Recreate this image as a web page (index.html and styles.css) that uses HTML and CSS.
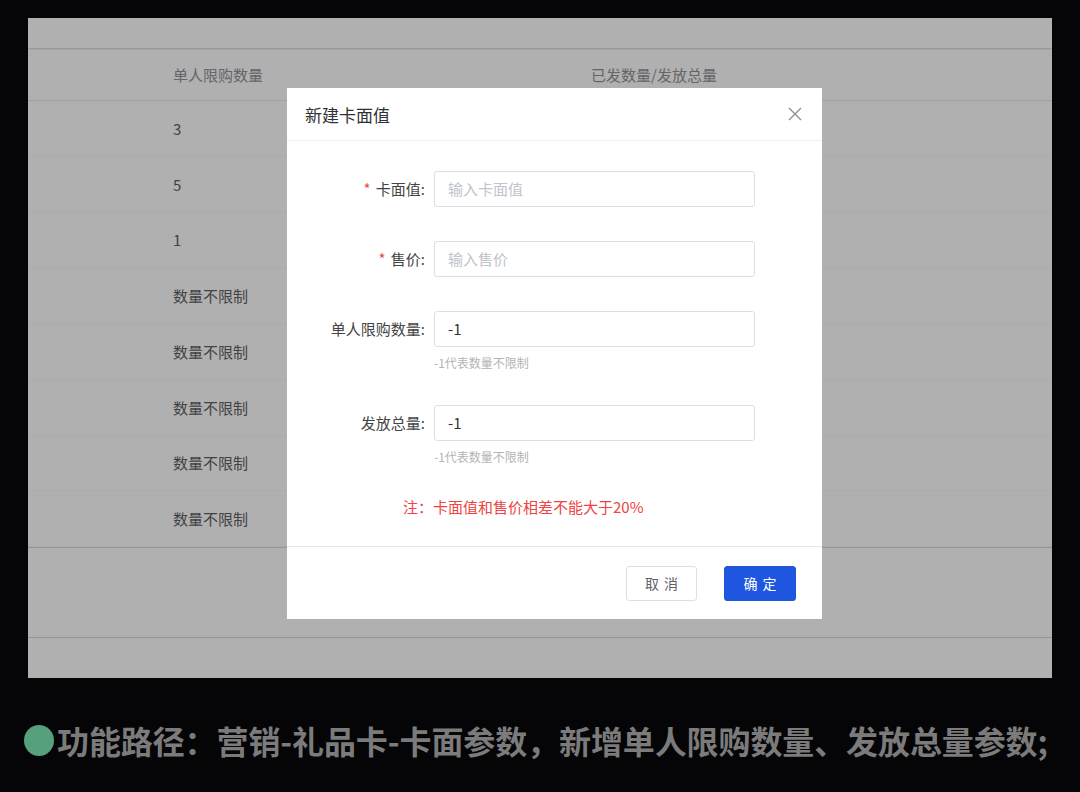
FILE: index.html
```html
<!DOCTYPE html>
<html lang="zh-CN">
<head>
    <meta charset="UTF-8">
    <title>新建卡面值</title>
    <link rel="stylesheet" href="styles.css">
</head>
<body>
    <div class="page">
        <div class="panel">
            <div class="top-band"></div>
            <div class="table">
                <div class="row head">
                    <div class="cell"></div>
                    <div class="cell">单人限购数量</div>
                    <div class="cell">已发数量/发放总量</div>
                </div>
                <div class="row"><div class="cell"></div><div class="cell">3</div><div class="cell"></div></div>
                <div class="row"><div class="cell"></div><div class="cell">5</div><div class="cell"></div></div>
                <div class="row"><div class="cell"></div><div class="cell">1</div><div class="cell"></div></div>
                <div class="row"><div class="cell"></div><div class="cell">数量不限制</div><div class="cell"></div></div>
                <div class="row"><div class="cell"></div><div class="cell">数量不限制</div><div class="cell"></div></div>
                <div class="row"><div class="cell"></div><div class="cell">数量不限制</div><div class="cell"></div></div>
                <div class="row"><div class="cell"></div><div class="cell">数量不限制</div><div class="cell"></div></div>
                <div class="row"><div class="cell"></div><div class="cell">数量不限制</div><div class="cell"></div></div>
            </div>
            <div class="pager"></div>
            <div class="bottom-band"></div>

            <!-- dialog mask -->
            <div class="mask"></div>

            <div class="dialog">
                <div class="dialog-header">
                    <span class="dialog-title">新建卡面值</span>
                    <svg class="close" width="14" height="14" viewBox="0 0 14 14">
                        <path d="M1 1 L13 13 M13 1 L1 13" stroke="#8c8c8c" stroke-width="1.3" fill="none"/>
                    </svg>
                </div>
                <div class="dialog-body">
                    <div class="form-item">
                        <label><span class="req">*</span> 卡面值:</label>
                        <div class="field"><div class="input placeholder">输入卡面值</div></div>
                    </div>
                    <div class="form-item">
                        <label><span class="req">*</span> 售价:</label>
                        <div class="field"><div class="input placeholder">输入售价</div></div>
                    </div>
                    <div class="form-item">
                        <label>单人限购数量:</label>
                        <div class="field">
                            <div class="input">-1</div>
                            <div class="hint">-1代表数量不限制</div>
                        </div>
                    </div>
                    <div class="form-item">
                        <label>发放总量:</label>
                        <div class="field">
                            <div class="input">-1</div>
                            <div class="hint">-1代表数量不限制</div>
                        </div>
                    </div>
                    <p class="note">注：卡面值和售价相差不能大于20%</p>
                </div>
                <div class="dialog-footer">
                    <button class="btn">取 消</button>
                    <button class="btn primary">确 定</button>
                </div>
            </div>
        </div>
    </div>

    <div class="caption">
        <span class="dot"></span>
        <span class="caption-text">功能路径：营销-礼品卡-卡面参数，新增单人限购数量、发放总量参数;</span>
    </div>
</body>
</html>
```

FILE: styles.css
```css
body {
    margin: 0;
    background-color: #050406;
    font-family: "Noto Sans CJK SC", "Noto Sans", sans-serif;
}

.page {
    padding: 18px 28px 0 28px;
}

.panel {
    position: relative;
    height: 660px;
    background-color: #fff;
    overflow: hidden;
}

.top-band {
    height: 30px;
    border-bottom: 1px solid #dcdcdc;
    box-shadow: 0 3px 0 -2px #f0f0f0;
}

.row {
    display: grid;
    grid-template-columns: 145px 418px 1fr;
    align-items: center;
    height: 55.75px;
    border-bottom: 1px solid #f8f8f8;
    box-sizing: border-box;
    font-size: 15px;
    color: #606266;
}

.row.head {
    height: 52px;
    border-bottom: 1px solid #e8e8e8;
    color: #909399;
}

.table {
    border-bottom: 1px solid #d8d8d8;
}

.pager {
    height: 89px;
    border-bottom: 1px solid #d8d8d8;
}

.mask {
    position: absolute;
    inset: 0;
    background-color: rgba(0, 0, 0, 0.31);
}

.dialog {
    position: absolute;
    left: 259px;
    top: 70px;
    width: 535px;
    height: 531px;
    background-color: #fff;
    display: flex;
    flex-direction: column;
}

.dialog-header {
    height: 52px;
    border-bottom: 1px solid #eeeeee;
    display: flex;
    align-items: center;
    justify-content: space-between;
    padding: 0 20px 0 18px;
}

.dialog-title {
    font-size: 17px;
    color: #303133;
}

.dialog-body {
    flex: 1;
    padding-top: 30px;
}

.form-item {
    display: flex;
    margin-bottom: 34px;
}

.form-item label {
    width: 138px;
    padding-right: 9px;
    text-align: right;
    font-size: 15px;
    line-height: 36px;
    color: #444;
}

.req {
    color: #e84b4b;
    margin-right: 2px;
}

.input {
    width: 321px;
    height: 36px;
    box-sizing: border-box;
    border: 1px solid #dcdfe6;
    border-radius: 3px;
    padding: 0 13px;
    font-size: 15px;
    line-height: 34px;
    color: #333;
}

.input.placeholder {
    color: #c0c4cc;
}

.hint {
    margin-top: 6px;
    margin-bottom: -2px;
    font-size: 12px;
    line-height: 20px;
    color: #b4b4b4;
}

.note {
    margin: 0 0 0 116px;
    font-size: 15px;
    line-height: 16px;
    color: #ee4444;
}

.dialog-footer {
    height: 72px;
    border-top: 1px solid #e6e6e6;
    display: flex;
    align-items: center;
    justify-content: flex-end;
    gap: 27px;
    padding-right: 26px;
}

.btn {
    width: 71px;
    height: 35px;
    border: 1px solid #dcdfe6;
    border-radius: 3px;
    background-color: #fff;
    color: #606266;
    font-family: inherit;
    font-size: 14px;
    letter-spacing: 1px;
    text-indent: 1px;
}

.btn.primary {
    width: 72px;
    background-color: #1f56df;
    border-color: #1f56df;
    color: #fff;
}

.caption {
    display: flex;
    align-items: center;
    height: 114px;
    padding: 10px 0 0 24px;
    box-sizing: border-box;
}

.dot {
    width: 30px;
    height: 31px;
    border-radius: 50%;
    background-color: #56a07d;
    margin-right: 3px;
}

.caption-text {
    font-size: 32px;
    font-weight: bold;
    color: #7b7b7b;
    white-space: nowrap;
    letter-spacing: -0.1px;
}
```
